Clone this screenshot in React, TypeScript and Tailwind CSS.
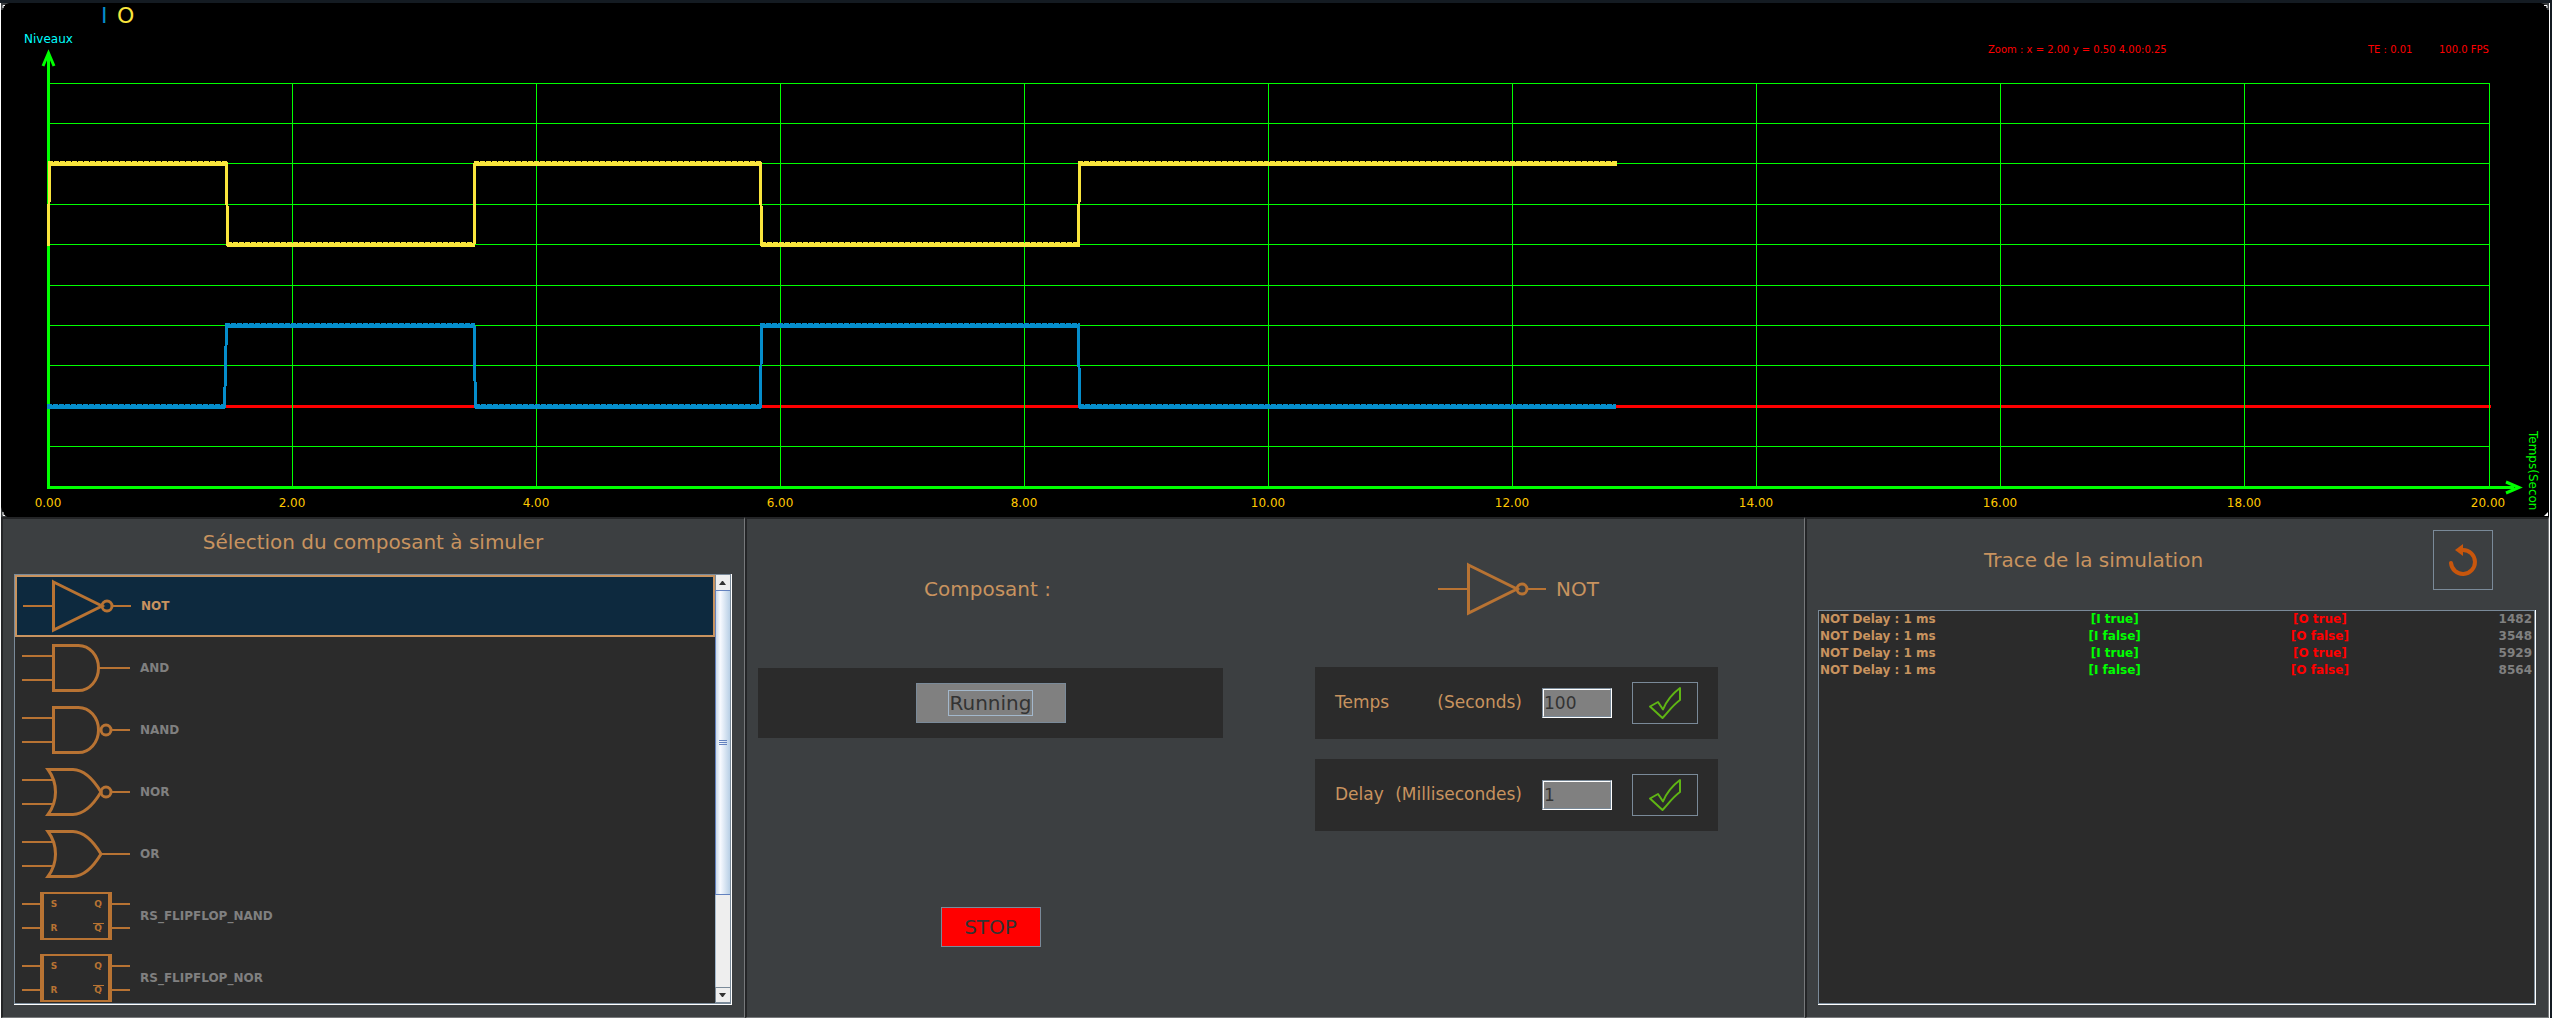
import React, { useState } from "react";

const COPPER = "#b87333";

type GateKind = "NOT" | "AND" | "NAND" | "NOR" | "OR" | "RS_FLIPFLOP_NAND" | "RS_FLIPFLOP_NOR";

const GATES: GateKind[] = ["NOT", "AND", "NAND", "NOR", "OR", "RS_FLIPFLOP_NAND", "RS_FLIPFLOP_NOR"];

const TRACE = [
  { id: 1, input: "[I true]", output: "[O true]", time: "1482" },
  { id: 2, input: "[I false]", output: "[O false]", time: "3548" },
  { id: 3, input: "[I true]", output: "[O true]", time: "5929" },
  { id: 4, input: "[I false]", output: "[O false]", time: "8564" },
];

function GateShape({ kind }: { kind: GateKind }) {
  const andBody = "M56.5 4.5H31.5V49.5H56.5A20 22.5 0 0 0 56.5 4.5Z";
  const orBody = "M26 4.5H51C64 5 73 17 79 27C73 37 64 49 51 49.5H26C36 36 36 18 26 4.5Z";
  switch (kind) {
    case "NOT":
      return (
        <>
          <path d="M0 27H30M90 27H108" strokeWidth="2" />
          <path d="M30.5 3L79 27L30.5 51Z" />
          <circle cx="84" cy="27" r="5" />
        </>
      );
    case "AND":
      return (
        <>
          <path d="M0 15H31M0 39H31M77 27H108" strokeWidth="2" />
          <path d={andBody} />
        </>
      );
    case "NAND":
      return (
        <>
          <path d="M0 15H31M0 39H31M90 27H108" strokeWidth="2" />
          <path d={andBody} />
          <circle cx="84" cy="27" r="5" />
        </>
      );
    case "NOR":
      return (
        <>
          <path d="M0 15H31M0 39H31M90 27H108" strokeWidth="2" />
          <path d={orBody} />
          <circle cx="84" cy="27" r="5" />
        </>
      );
    case "OR":
      return (
        <>
          <path d="M0 15H31M0 39H31M80 27H108" strokeWidth="2" />
          <path d={orBody} />
        </>
      );
    default:
      return (
        <>
          <path d="M0 15H18M0 39H18M90 15H108M90 39H108M18 4H90M18 50H90" strokeWidth="2" />
          <path d="M20 3V51M88 3V51" strokeWidth="4" />
          <path d="M71 34.5H82" strokeWidth="1" />
          <g fill={COPPER} stroke="none" fontSize="9" fontFamily="DejaVu Sans, sans-serif" textAnchor="middle">
            <text x="32" y="18">S</text>
            <text x="32" y="42">R</text>
            <text x="76" y="18">Q</text>
            <text x="76" y="42">Q</text>
          </g>
        </>
      );
  }
}

function GateIcon({ kind }: { kind: GateKind }) {
  return (
    <svg width="108" height="54" viewBox="0 0 108 54" fill="none" stroke={COPPER} strokeWidth="3" className="shrink-0" aria-hidden="true">
      <GateShape kind={kind} />
    </svg>
  );
}

const GRID_Y = [83, 123, 163, 204, 244, 285, 325, 365, 406, 446];
const GRID_X = [292, 536, 780, 1024, 1268, 1512, 1756, 2000, 2244, 2489];
const X_LABELS = ["0.00", "2.00", "4.00", "6.00", "8.00", "10.00", "12.00", "14.00", "16.00", "18.00", "20.00"];

interface Trace {
  color: string;
  edges: string;
  levels: [number, number, number][];
}

const SIGNALS: Trace[] = [
  {
    color: "#f9e53c",
    edges: "M48.5 246L49.5 163M226.5 163L227.5 246M474 246L475 163M760.5 163L761.5 246M1078.5 246L1079.5 163",
    levels: [[48, 228, 164], [227, 475, 245], [474, 762, 164], [761, 1080, 245], [1078, 1617, 164]],
  },
  {
    color: "#058dcb",
    edges: "M224.5 408L226.5 325M474 325L475.5 408M760.5 408L761.5 325M1078.5 325L1079.5 408",
    levels: [[47, 225, 407], [225, 475, 326], [475, 761, 407], [760, 1080, 326], [1079, 1616, 407]],
  },
];

function Scope() {
  return (
    <svg viewBox="1 3 2548 514" className="block h-auto w-full shrink-0 bg-black" fontFamily="DejaVu Sans, sans-serif" role="img" aria-label="Niveaux / Temps">
      <path d="M1 3H9L4 5L3 10H1ZM2549 3H2541L2546 5L2547 10H2549ZM1 517V507L3 513L7 517Z" fill="#3c3f41" />
      <path d="M3 8V5.5H5M2544 5.5H2547V8M3 512V515.500H5" fill="none" stroke="#ffffff" />
      <path d="M2544 516L2548 512V516Z" fill="#ffffff" />
      <text x="101" y="23" fontSize="22" fill="#058dcb">I</text>
      <text x="117" y="23" fontSize="22" fill="#f9e53c">O</text>
      <text x="24" y="43" fontSize="12" fill="#00ffff">Niveaux</text>
      <g fontSize="10" fill="#ff0000">
        <text x="1988" y="53">Zoom : x = 2.00 y = 0.50 4.00:0.25</text>
        <text x="2368" y="53">TE : 0.01</text>
        <text x="2439" y="53">100.0 FPS</text>
      </g>
      <g shapeRendering="crispEdges" fill="none">
        <path d="M48 406.500H2491" stroke="#ff0000" strokeWidth="3" />
        <g stroke="#00ff00" strokeWidth="1">
          {GRID_Y.map((y) => (
            <line key={y} x1="48" x2="2490" y1={y + 0.5} y2={y + 0.5} stroke={y === 406 ? "none" : undefined} />
          ))}
          {GRID_X.map((x) => (
            <line key={x} x1={x + 0.5} x2={x + 0.5} y1="83" y2="487" />
          ))}
        </g>
        <path d="M48.500 54V487.500H2514" stroke="#00ff00" strokeWidth="3" />
        {SIGNALS.map((s) => (
          <g key={s.color} stroke={s.color}>
            <path d={s.edges} strokeWidth="3" />
            {s.levels.map(([a, b, y]) => (
              <React.Fragment key={a}>
                <line x1={a} x2={b} y1={y} y2={y} strokeWidth="4" />
                <line x1={a} x2={b} y1={y - 2.5} y2={y - 2.5} strokeWidth="1" strokeDasharray="5 1" />
              </React.Fragment>
            ))}
          </g>
        ))}
      </g>
      <path d="M43 66L48.500 53L54 66M2506 482L2519 487.500L2506 493" fill="none" stroke="#00ff00" strokeWidth="3" />
      <g fontSize="12" fill="#ffc800" textAnchor="middle">
        {X_LABELS.map((t, i) => (
          <text key={t} x={48 + i * 244} y="507">{t}</text>
        ))}
      </g>
      <text transform="translate(2529 431) rotate(90)" fontSize="12" fill="#00ff00">Temps(Secon</text>
    </svg>
  );
}

function Pane({ className, children }: { className: string; children: React.ReactNode }) {
  return (
    <section className={`flex min-h-0 min-w-0 border-t-2 border-r border-b border-l-2 border-t-[#242527] border-r-[#77797b] border-b-[#77797b] border-l-[#242527] ${className}`}>
      {children}
    </section>
  );
}

function ScrollBar() {
  return (
    <div className="flex w-4 shrink-0 flex-col border-r border-[#7a8a99] bg-[#eeeeee]" aria-hidden="true">
      <div className="flex h-[15px] items-center justify-center border-l border-[#7a8a99]">
        <svg width="8" height="4" viewBox="0 0 8 4" fill="#333333"><path d="M0 4L3 0H4L7 4Z" /></svg>
      </div>
      <div className="flex grow-[305] basis-0 flex-col items-center justify-center gap-px border border-r-0 border-[#6382bf] bg-linear-to-r from-[#c8d8e8] via-[#f8faff] via-30% to-[#b8cfe5]">
        <div className="h-px w-2 bg-[#6382bf]" />
        <div className="h-px w-2 bg-[#6382bf]" />
        <div className="h-px w-2 bg-[#6382bf]" />
      </div>
      <div className="grow-[92] basis-0 border-l border-[#a3b8cc]" />
      <div className="flex h-4 items-center justify-center border-t border-b border-l border-[#7a8a99]">
        <svg width="8" height="4" viewBox="0 0 8 4" fill="#333333"><path d="M0 0L3 4H4L7 0Z" /></svg>
      </div>
    </div>
  );
}

function GateList({ selected, onSelect }: { selected: GateKind; onSelect: (g: GateKind) => void }) {
  return (
    <div className="flex min-h-0 flex-1 border-r border-b border-white">
      <div className="flex min-w-0 flex-1 overflow-hidden border-t border-b border-l border-[#7a8a99] bg-[#2b2b2b]">
        <ul className="min-w-0 flex-1">
          {GATES.map((g) => (
            <li key={g}>
              <button
                type="button"
                aria-pressed={g === selected}
                onClick={() => onSelect(g)}
                className={
                  g === selected
                    ? "flex h-[62px] w-full items-center gap-2.5 border-2 border-[#c8935f] bg-[#0d293e] pl-1.5 text-xs font-bold text-[#c8935f]"
                    : "flex h-[62px] w-full items-center gap-2.5 pl-[7px] text-xs font-bold text-[#808080]"
                }
              >
                <GateIcon kind={g} />
                {g}
              </button>
            </li>
          ))}
        </ul>
        <ScrollBar />
      </div>
    </div>
  );
}

function Setting({ id, label, unit, value }: { id: string; label: string; unit: string; value: string }) {
  return (
    <div className="flex h-[72px] items-center gap-5 bg-[#2b2b2b] px-5">
      <label htmlFor={id} className="flex flex-1 justify-between text-[17px] whitespace-nowrap">
        <span>{label}</span>
        <span>{unit}</span>
      </label>
      <div className="flex h-[30px] w-[70px] shrink-0 border-t border-r border-b border-l border-t-[#7a8a99] border-r-white border-b-white border-l-[#7a8a99]">
        <input
          id={id}
          defaultValue={value}
          className="h-full w-full min-w-0 border border-t-white border-r-[#7a8a99] border-b-[#7a8a99] border-l-white bg-[#808080] text-[17px] leading-none text-[#333333] outline-none"
        />
      </div>
      <button type="button" aria-label={`Valider ${label}`} className="flex h-[42px] w-[66px] shrink-0 items-center justify-center border border-[#7a8a99]">
        <svg width="34" height="34" viewBox="-17 -17 34 34" fill="none" stroke="#5fb514" strokeWidth="2" strokeLinejoin="round">
          <path d="M-15 3.500L-7 -1L-2 6.500C1 -1 7 -9 15 -15V-3C8 2 3 9 -2.500 15Z" />
        </svg>
      </button>
    </div>
  );
}

export default function App() {
  const [selected, setSelected] = useState<GateKind>("NOT");
  return (
    <div className="flex h-screen flex-col border-t-[3px] border-r-2 border-[#141b22] bg-[#3c3f41] font-['DejaVu_Sans',sans-serif] text-[#c8935f]">
      <div className="flex min-h-0 flex-1 flex-col border-r border-l border-white">
        <Scope />
        <main className="grid min-h-0 flex-1 grid-cols-[744fr_1060fr_744fr] grid-rows-1">
          <Pane className="flex-col pr-3 pb-3 pl-[11px]">
            <h2 className="flex h-[55px] items-center justify-center pb-2.5 text-xl">Sélection du composant à simuler</h2>
            <GateList selected={selected} onSelect={setSelected} />
          </Pane>

          <Pane className="pr-[86px] pl-[11px]">
            <div className="grid flex-1 grid-cols-[465fr_403fr] gap-x-[92px]">
              <div className="flex flex-col items-center">
                <h2 className="flex h-[149px] items-center pr-1.5 pb-2.5 text-xl">Composant :</h2>
                <div className="flex h-[70px] w-full items-center justify-center bg-[#2b2b2b]">
                  <button type="button" className="flex h-10 w-[150px] items-center justify-center border border-[#7a8a99] bg-[#808080] text-xl text-[#333333]">
                    <span className="border border-[#a3b8cc] px-px leading-6">Running</span>
                  </button>
                </div>
                <button type="button" className="mt-[169px] h-10 w-[100px] border border-[#7a8a99] bg-[#ff0000] text-xl text-[#333333]">
                  STOP
                </button>
              </div>
              <div className="flex flex-col">
                <div className="flex h-[148px] items-center justify-center gap-2.5 pb-2 pl-1 text-xl">
                  <GateIcon kind={selected} />
                  {selected}
                </div>
                <div className="flex flex-col gap-5">
                  <Setting id="duration" label="Temps" unit="(Seconds)" value="100" />
                  <Setting id="delay" label="Delay" unit="(Millisecondes)" value="1" />
                </div>
              </div>
            </div>
          </Pane>

          <Pane className="flex-col pr-3 pb-3 pl-[11px]">
            <div className="flex h-[91px] items-center pt-1 pr-[43px] pb-3.5">
              <h2 className="flex-1 text-center text-xl">
                <span className="pr-16">Trace de la simulation</span>
              </h2>
              <button type="button" aria-label="Réinitialiser" className="flex h-[60px] w-[60px] items-center justify-center border border-[#7a8a99]">
                <svg width="32" height="32" viewBox="-16 -18 32 32" fill="none">
                  <path d="M-12 1A12 12 0 1 0 0 -12" stroke="#c8560c" strokeWidth="4" strokeLinecap="round" />
                  <path d="M-8 -12L0 -18V-6Z" fill="#c8560c" />
                </svg>
              </button>
            </div>
            <div className="flex min-h-0 flex-1 border-r border-b border-white">
              <div className="min-w-0 flex-1 overflow-hidden border border-[#7a8a99] bg-[#2b2b2b]">
                <table className="w-full table-fixed text-xs font-bold">
                  <colgroup>
                    <col className="w-[27%]" />
                    <col className="w-[28.7%]" />
                    <col className="w-[28.7%]" />
                    <col />
                  </colgroup>
                  <tbody>
                    {TRACE.map((t) => (
                      <tr key={t.id} className="h-[17px] leading-[17px]">
                        <td className="p-0 pl-px">NOT Delay : 1 ms</td>
                        <td className="p-0 text-center text-[#00ff00]">{t.input}</td>
                        <td className="p-0 text-center text-[#ff0000]">{t.output}</td>
                        <td className="p-0 pr-0.5 text-right text-[#808080]">{t.time}</td>
                      </tr>
                    ))}
                  </tbody>
                </table>
              </div>
            </div>
          </Pane>
        </main>
      </div>
    </div>
  );
}
